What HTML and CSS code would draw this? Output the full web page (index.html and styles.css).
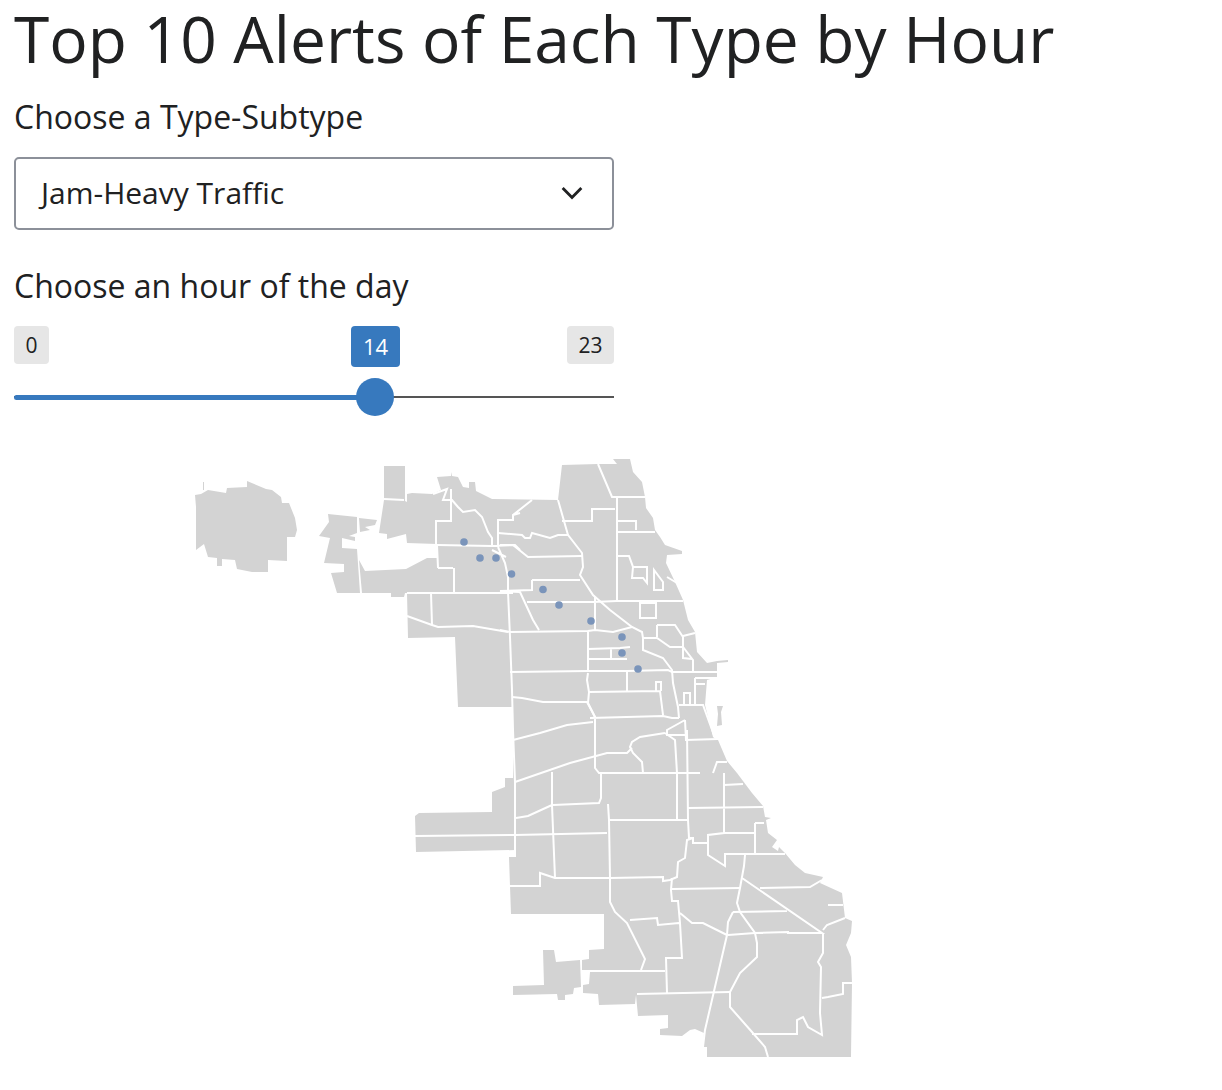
FILE: index.html
```html
<!DOCTYPE html>
<html lang="en">
<head>
    <meta charset="UTF-8">
    <title>Top 10 Alerts of Each Type by Hour</title>
    <link rel="stylesheet" href="styles.css">
</head>
<body>
    <h1 class="page-title">Top 10 Alerts of Each Type by Hour</h1>

    <div class="controls">
        <label class="field-label">Choose a Type-Subtype</label>
        <div class="select-box">
            <span>Jam-Heavy Traffic</span>
            <svg class="chevron" viewBox="0 0 20 12"><path d="M1.5 1.5 10 10l8.5-8.5"/></svg>
        </div>

        <label class="field-label hour-label">Choose an hour of the day</label>
        <div class="slider">
            <div class="slider-ends">
                <span class="end-badge">0</span>
                <span class="end-badge">23</span>
            </div>
            <span class="value-badge" style="left: 337px">14</span>
            <div class="track">
                <div class="track-fill" style="width: 361px"></div>
            </div>
            <span class="thumb" style="left: 342px"></span>
        </div>
    </div>

    <svg class="map" viewBox="0 440 870 630" width="870" height="630">
        <!-- land -->
        <g class="land">
            <path d="M195 495 201 494 208 490 226 493 227 488 247 487 247 481 266 489 272 490 281 497 282 503 289 503 295 518 297 530 295 537 287 537 287 561 268 560 268 572 252 572 237 569 235 560 222 559 222 566 217 566 217 558 208 557 204 544 196 550 196 507Z"/>
            <path d="M203 482h1v8h-1zM328 514 357 517 357 533 349 536 355 537 355 541 342 538 342 548 357 549 360 593 337 593 331 573 344 572 344 564 324 563 330 538 319 536 329 522Z"/>
            <path d="M359 518 377 520 375 525 365 527 370 530 360 532Z"/>
            <path d="M384 466 405 466 405 501 407 502 407 494 412 493 432 494 441 490 437 477 451 476 451 472 452 476 458 477 463 487 469 488 469 482 475 482 476 491 492 499 558 500 562 465 598 464 617 464 613 459 630 459 633 472 642 482 645 497 646 508 653 518 655 530 660 537 665 545 682 551 682 554 667 555 666 563 675 582 683 600 688 620 695 632 697 652 707 663 717 661 728 660 728 662 717 663 717 677 707 680 705 705 713 737 718 740 727 761 737 773 752 793 763 806 765 817 771 818 766 820 768 833 777 840 772 847 778 851 779 847 785 853 795 865 805 873 823 877 820 883 842 893 845 918 852 921 851 933 846 945 851 957 852 983 851 1057 707 1057 707 1047 703 1047 704 1033 695 1029 690 1030 682 1036 660 1035 660 1029 668 1028 668 1015 638 1016 636 995 635 1004 599 1005 598 994 583 993 583 985 589 984 590 972 582 971 582 960 589 959 589 950 604 949 604 914 511 914 510 886 509 857 516 857 516 850 416 852 415 816 419 813 492 812 492 792 505 787 505 778 513 778 513 730 512 707 458 707 455 637 408 638 407 593 405 593 404 597 391 597 391 593 362 593 359 560 365 571 406 569 427 558 437 558 437 544 407 543 406 534 387 539 387 534 379 533 384 500Z"/>
            <path d="M543 950 554 950 556 962 580 960 581 987 574 988 573 994 565 995 565 1000 558 1000 557 994 513 995 513 986 544 985Z"/>
            <path d="M717 706 723 706 721 712 722 725 717 726 718 714Z"/>
        </g>
        <!-- community area borders -->
        <g class="borders">
            <path d="M384 499 404 500M433 494 447 489 443 500 452 500 458 507 463 512 475 510 482 517 488 532 492 538 492 545"/>
            <path d="M451 489V521H436V544M437 545 492 546 515 545 520 550M498 547V520H513V515L520 513M513 521V515L532 500"/>
            <path d="M498 533 522 535 525 538 530 538 532 533 550 538 558 535 568 535 582 553 583 567 580 575 593 595 610 610 632 627 642 632 643 638 643 650 663 658 672 670 673 683 678 707 679 718"/>
            <path d="M558 500 568 535M500 545H513L528 557 582 556M598 464 612 497H645M617 498V600"/>
            <path d="M562 521H592V509H615M617 521H636V530M617 532H655"/>
            <path d="M617 556H629L633 567 632 578H643L647 583V567H633M654 570V590H663V582ZM667 577 677 583"/>
            <path d="M527 602 593 602 617 601H683M595 597V630M532 580H580M532 580V590L500 591 520 592 533 620 539 630M500 630 510 632 588 631 595 630 613 632 632 627"/>
            <path d="M498 547 505 563 508 577 508 592 510 637 512 690 513 730 515 782V857M492 550 506 557"/>
            <path d="M407 593H513M431 593 432 625M407 616 432 625 438 627 473 626 508 632M454 568V592M438 568H453M437 545 438 568"/>
            <path d="M588 632V670M588 649 620 648 630 647M611 649V658M588 659H627M510 672 588 671 627 671 668 670 672 672H717M643 638H657L670 647H683L693 660V672M657 625H675L683 637V658L692 659M657 625V637M683 636 695 633"/>
            <path d="M695 678H717M695 678V705M695 684H705M684 704V693H690V704M679 705H703L715 738M640 603V618H656V603Z"/>
            <path d="M588 673 587 680 589 692 588 703 595 717 595 750M589 692 660 691 663 715M627 672V692M656 691V682H661V691M590 718 663 716 672 718 679 718"/>
            <path d="M685 720 667 730V735H685M685 720 686 740 718 739M665 733 640 737 632 742 630 747 633 753 642 762 643 773"/>
            <path d="M512 697 522 698 543 702 587 702 595 717M513 740 540 733 567 725 593 722M515 782 570 763 607 753 627 753 632 748"/>
            <path d="M595 730V768L599 773H700M601 773 601 798 599 803 553 805M608 804 609 820 610 878 610 902 615 912 627 923 645 959 641 970M582 971H665"/>
            <path d="M552 772V805L555 878M510 886H540V873L555 878H610L663 877V881L670 880 677 877 678 862 685 858 687 840 693 838M516 818 528 816 552 805M415 836 515 835 607 833"/>
            <path d="M609 820H688M677 773V820M687 730 688 820 689 838H693L693 843H708M665 733 675 740 677 773"/>
            <path d="M672 878 671 890 672 901H678L680 923 682 958H666L667 993M630 920 657 918 658 925 679 923M637 994 730 992M680 913 692 923 703 923 727 935"/>
            <path d="M713 773 717 762H727M724 773 724 833 708 835V855L725 866V854H785M724 785 743 784M688 808 763 807M755 823H764M755 823V853M724 833 755 833"/>
            <path d="M745 855 744 866 742 877 740 888 737 903 740 912 755 933 757 943 757 957 740 973 730 992 730 1007 752 1032 765 1047 768 1057"/>
            <path d="M672 889 740 888M742 878 822 933 788 933V932L755 933 728 935M760 888 810 887 822 880M733 912 787 911M733 912 728 922 727 935 705 1030 703 1047"/>
            <path d="M823 933V953L818 962 821 967 820 1013 822 1035 808 1027 803 1017 797 1020V1034H752M823 930 827 925 845 918M822 998 828 997 843 994V983H852M828 905H843"/>
        </g>
        <g class="alerts">
            <circle cx="464" cy="542" r="3.8"/>
            <circle cx="480" cy="558" r="3.8"/>
            <circle cx="496" cy="558" r="3.8"/>
            <circle cx="511.500" cy="574" r="3.8"/>
            <circle cx="543" cy="589.500" r="3.8"/>
            <circle cx="559" cy="605" r="3.8"/>
            <circle cx="591" cy="621" r="3.8"/>
            <circle cx="622" cy="637" r="3.8"/>
            <circle cx="622" cy="653" r="3.8"/>
            <circle cx="638" cy="669" r="3.8"/>
        </g>
    </svg>
</body>
</html>
```
FILE: styles.css
```css
body {
    font-family: 'Open Sans', sans-serif;
    color: #202122;
    background-color: #ffffff;
    margin: 0;
    padding: 0 14px;
}

.page-title {
    font-size: 64px;
    font-weight: 400;
    line-height: 77px;
    margin: 0;
    white-space: nowrap;
}

.controls {
    width: 600px;
}

.field-label {
    display: block;
    font-size: 32px;
    line-height: 40px;
    margin-top: 20px;
}

.select-box {
    display: flex;
    align-items: center;
    justify-content: space-between;
    height: 73px;
    box-sizing: border-box;
    margin-top: 20px;
    padding: 0 29px 2px 25px;
    border: 2px solid #8c9099;
    border-radius: 5px;
    font-size: 30px;
}

.chevron {
    width: 22px;
    height: 14px;
    fill: none;
    stroke: #202122;
    stroke-width: 2.6;
}

.hour-label {
    margin-top: 36px;
}

.slider {
    position: relative;
    height: 100px;
    margin-top: 20px;
    font-size: 21px;
}

.slider-ends {
    display: flex;
    justify-content: space-between;
}

.end-badge {
    background-color: #e6e6e6;
    border-radius: 4px;
    padding: 0 11.5px;
    height: 38px;
    line-height: 38px;
}

.value-badge {
    position: absolute;
    top: 0;
    height: 41px;
    line-height: 41px;
    padding: 0 12px;
    font-size: 22px;
    background-color: #3779be;
    color: #ffffff;
    border-radius: 4px;
}

.track {
    margin-top: 32px;
    height: 2px;
    background-color: #555555;
}

.track-fill {
    height: 5px;
    position: relative;
    top: -1px;
    border-radius: 3px;
    background-color: #3779be;
}

.thumb {
    position: absolute;
    top: 52px;
    width: 38px;
    height: 38px;
    border-radius: 50%;
    background-color: #3779be;
}

.map {
    display: block;
    margin: 14px 0 0 -14px;
}

.land {
    fill: #d3d3d3;
}

.borders {
    fill: none;
    stroke: #ffffff;
    stroke-width: 2;
}

.alerts {
    fill: #7a94ba;
}
```
